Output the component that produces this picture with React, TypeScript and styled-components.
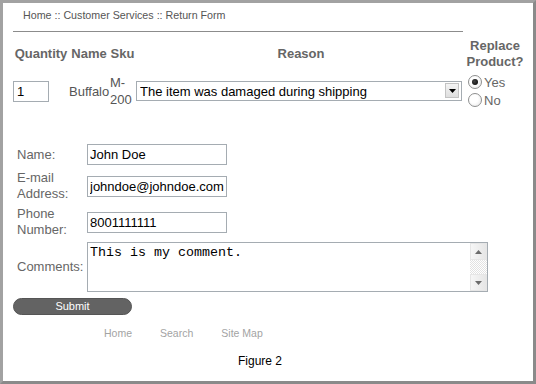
import styled, { createGlobalStyle } from 'styled-components'

const GlobalStyle = createGlobalStyle`
  html, body {
    margin: 0;
    padding: 0;
    background: #fff;
  }
  body {
    font-family: "Liberation Sans", Arial, sans-serif;
  }
`

const Frame = styled.div`
  box-sizing: border-box;
  width: 536px;
  height: 384px;
  overflow: hidden;
  border: 3px solid #a2a2a2;
  border-right-color: #8a8a8a;
  border-bottom-color: #8a8a8a;
  padding: 0 10px;
  background: #fff;
`

const Breadcrumb = styled.div`
  padding: 0 0 4px 10px;
  line-height: 24px;
  font-size: 10.7px;
  color: #555;
`

const Rule = styled.div`
  width: 450px;
  height: 1px;
  background: #8c8c8c;
`

const ProductGrid = styled.div`
  display: grid;
  grid-template-columns: 56px 40px 27px 330px 58px;
  grid-template-rows: 32px 36px;
  row-gap: 3px;
  align-items: center;
  margin-top: 6px;
`

const HeadCell = styled.div`
  text-align: center;
  font-weight: bold;
  font-size: 13px;
  line-height: 16px;
  color: #666;
`

const TextCell = styled.div<{ $pad?: number }>`
  font-size: 13px;
  line-height: 17px;
  color: #555;
  padding-left: ${p => p.$pad ?? 0}px;
`

const QtyInput = styled.input`
  box-sizing: border-box;
  width: 36px;
  height: 21px;
  border: 1px solid #a5acb2;
  padding: 0 3px;
  font: 13px "Liberation Sans", Arial, sans-serif;
  color: #000;
  outline: none;
`

const SelectWrap = styled.div`
  position: relative;
  width: 326px;
  height: 20px;
`

const Select = styled.select`
  box-sizing: border-box;
  appearance: none;
  width: 100%;
  height: 100%;
  border: 1px solid #a5acb2;
  border-radius: 0;
  background: #fff;
  padding: 0 0 0 3px;
  font: 13px "Liberation Sans", Arial, sans-serif;
  color: #000;
  outline: none;
`

const DropButton = styled.span`
  position: absolute;
  top: 2px;
  right: 3px;
  width: 14px;
  height: 15px;
  box-sizing: border-box;
  border: 1px solid #c3c3c3;
  background: linear-gradient(#f4f4f4, #dedede);
  display: flex;
  align-items: center;
  justify-content: center;
  pointer-events: none;
`

const RadioList = styled.div`
  display: flex;
  flex-direction: column;
  padding-left: 2px;
`

const RadioLabel = styled.label`
  display: flex;
  align-items: center;
  height: 18px;
  font-size: 13px;
  color: #666;
`

const Radio = styled.input`
  appearance: none;
  box-sizing: border-box;
  width: 14px;
  height: 14px;
  margin: 0 2px 0 0;
  border: 1px solid #8e8f8f;
  border-radius: 50%;
  background: radial-gradient(circle at 40% 40%, #fff 40%, #e4e4e4 100%);
  display: grid;
  place-items: center;
  &:checked::after {
    content: '';
    width: 6px;
    height: 6px;
    border-radius: 50%;
    background: radial-gradient(circle at 40% 40%, #444, #000);
  }
`

const ContactGrid = styled.div`
  display: grid;
  grid-template-columns: 74px auto;
  grid-template-rows: 23px 32px 32px 50px;
  row-gap: 4px;
  align-items: center;
  justify-items: start;
  margin-top: 34px;
`

const FieldLabel = styled.div`
  padding-left: 4px;
  font-size: 13px;
  line-height: 16px;
  color: #666;
`

const TextInput = styled.input`
  box-sizing: border-box;
  width: 140px;
  height: 21px;
  border: 1px solid #a5acb2;
  padding: 0 2px;
  font: 13px "Liberation Sans", Arial, sans-serif;
  color: #000;
  outline: none;
`

const CommentBox = styled.div`
  box-sizing: border-box;
  display: flex;
  width: 401px;
  height: 50px;
  border: 1px solid #a5acb2;
`

const CommentArea = styled.textarea`
  flex: 1;
  border: none;
  resize: none;
  outline: none;
  padding: 2px 2px;
  margin: 0;
  font: 13.33px "Liberation Mono", "Courier New", monospace;
  line-height: 15px;
  color: #000;
  overflow: hidden;
`

const ScrollTrack = styled.div`
  width: 17px;
  display: flex;
  flex-direction: column;
  justify-content: space-between;
  background: repeating-conic-gradient(#e2e2e2 0 25%, #fff 0 50%) 0 0 / 2px 2px;
`

const ScrollButton = styled.div`
  box-sizing: border-box;
  width: 17px;
  height: 17px;
  border: 1px solid #e6e6e6;
  background: linear-gradient(90deg, #f6f6f6, #e6e6e6);
  display: flex;
  align-items: center;
  justify-content: center;
`

const SubmitButton = styled.button`
  display: block;
  box-sizing: border-box;
  width: 119px;
  height: 17px;
  margin-top: 6px;
  padding: 0;
  border: 1px solid #555;
  border-radius: 9px;
  background: #636363;
  color: #fff;
  font: 11px "Liberation Sans", Arial, sans-serif;
  line-height: 15px;
`

const FooterLinks = styled.div`
  display: flex;
  gap: 28px;
  margin-top: 12px;
  padding-left: 91px;
  line-height: 12px;
`

const FooterLink = styled.a`
  font-size: 10.5px;
  color: #a3a3a3;
  text-decoration: none;
`

const Caption = styled.div`
  margin-top: 15px;
  padding-left: 225px;
  line-height: 14px;
  font-size: 12px;
  color: #000;
`

const Triangle = ({ up }: { up?: boolean }) => (
  <svg width="7" height="4" viewBox="0 0 7 4">
    <path d={up ? 'M0 4 L3.5 0 L7 4 Z' : 'M0 0 L7 0 L3.5 4 Z'} fill={up ? '#6b6b6b' : '#6b6b6b'} />
  </svg>
)

export default function App() {
  return (
    <>
      <GlobalStyle />
      <Frame>
        <Breadcrumb>Home :: Customer Services :: Return Form</Breadcrumb>
        <Rule />

        <ProductGrid>
          <HeadCell>Quantity</HeadCell>
          <HeadCell>Name</HeadCell>
          <HeadCell>Sku</HeadCell>
          <HeadCell>Reason</HeadCell>
          <HeadCell>Replace Product?</HeadCell>

          <div>
            <QtyInput defaultValue="1" />
          </div>
          <TextCell>Buffalo</TextCell>
          <TextCell $pad={1}>M-200</TextCell>
          <SelectWrap>
            <Select defaultValue="damaged">
              <option value="damaged">The item was damaged during shipping</option>
              <option value="wrong">The wrong item was shipped</option>
            </Select>
            <DropButton>
              <svg width="7" height="4" viewBox="0 0 7 4">
                <path d="M0 0 L7 0 L3.5 4 Z" fill="#000" />
              </svg>
            </DropButton>
          </SelectWrap>
          <RadioList>
            <RadioLabel>
              <Radio type="radio" name="replace" defaultChecked />
              Yes
            </RadioLabel>
            <RadioLabel>
              <Radio type="radio" name="replace" />
              No
            </RadioLabel>
          </RadioList>
        </ProductGrid>

        <ContactGrid>
          <FieldLabel>Name:</FieldLabel>
          <TextInput defaultValue="John Doe" />
          <FieldLabel>E-mail Address:</FieldLabel>
          <TextInput defaultValue="johndoe@johndoe.com" />
          <FieldLabel>Phone Number:</FieldLabel>
          <TextInput defaultValue="8001111111" />
          <FieldLabel>Comments:</FieldLabel>
          <CommentBox>
            <CommentArea defaultValue="This is my comment." />
            <ScrollTrack>
              <ScrollButton>
                <Triangle up />
              </ScrollButton>
              <ScrollButton>
                <Triangle />
              </ScrollButton>
            </ScrollTrack>
          </CommentBox>
        </ContactGrid>

        <SubmitButton type="button">Submit</SubmitButton>

        <FooterLinks>
          <FooterLink href="#">Home</FooterLink>
          <FooterLink href="#">Search</FooterLink>
          <FooterLink href="#">Site Map</FooterLink>
        </FooterLinks>

        <Caption>Figure 2</Caption>
      </Frame>
    </>
  )
}
